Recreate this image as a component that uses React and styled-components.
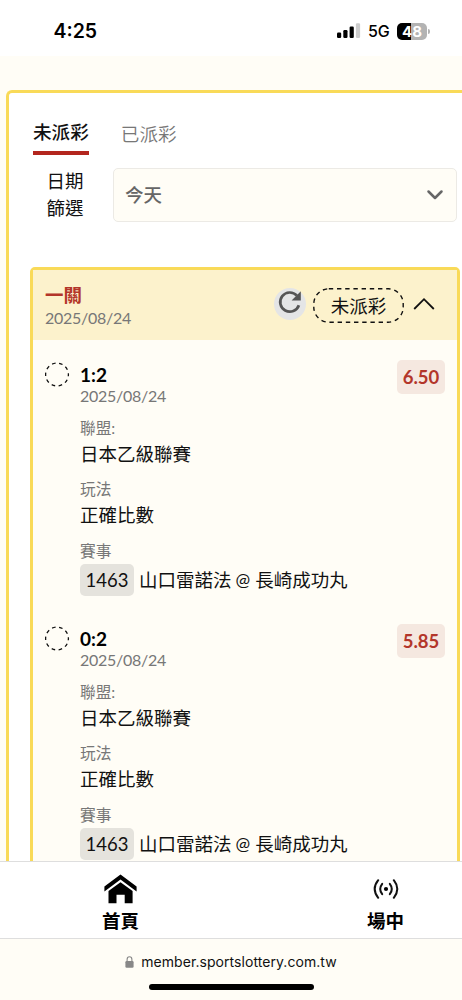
import styled, { createGlobalStyle } from "styled-components";

const bets = [
  {
    id: 1,
    pick: "1:2",
    date: "2025/08/24",
    league: "日本乙級聯賽",
    play: "正確比數",
    code: "1463",
    home: "山口雷諾法",
    away: "長崎成功丸",
    odds: "6.50",
  },
  {
    id: 2,
    pick: "0:2",
    date: "2025/08/24",
    league: "日本乙級聯賽",
    play: "正確比數",
    code: "1463",
    home: "山口雷諾法",
    away: "長崎成功丸",
    odds: "5.85",
  },
];

function StatusBar() {
  return (
    <StatusRow>
      <Clock>4:25</Clock>
      <StatusIcons>
        <svg width="24" height="16" viewBox="0 0 24 16">
          <rect x="0" y="9.5" width="4.2" height="5.5" rx="1.2" />
          <rect x="6.3" y="7" width="4.2" height="8" rx="1.2" />
          <rect x="12.6" y="3.6" width="4.2" height="11.4" rx="1.2" />
          <rect x="18.9" y="0.3" width="4.2" height="14.7" rx="1.2" fill="#ccc" />
        </svg>
        <Network>5G</Network>
        <Battery>48</Battery>
        <BatteryTip />
      </StatusIcons>
    </StatusRow>
  );
}

function Bet({ bet }) {
  return (
    <BetRow>
      <svg width="25" height="25" viewBox="0 0 25 25">
        <circle
          cx="12"
          cy="12.5"
          r="11.4"
          fill="none"
          stroke="#111"
          strokeWidth="1.3"
          strokeDasharray="3.6 3.563"
          strokeDashoffset="1.8"
        />
      </svg>
      <BetBody>
        <Pick>{bet.pick}</Pick>
        <DateText>{bet.date}</DateText>
        <Field>
          <Label>聯盟:</Label>
          <Value>{bet.league}</Value>
        </Field>
        <Field>
          <Label>玩法</Label>
          <Value>{bet.play}</Value>
        </Field>
        <Field>
          <Label>賽事</Label>
          <Match>
            <Code>{bet.code}</Code>
            <span>{bet.home}</span>
            <At>@</At>
            <span>{bet.away}</span>
          </Match>
        </Field>
      </BetBody>
      <Odds>{bet.odds}</Odds>
    </BetRow>
  );
}

function App() {
  return (
    <Phone>
      <GlobalStyle />
      <StatusBar />
      <Content>
        <Panel>
          <Tabs>
            <Tab $active>未派彩</Tab>
            <Tab>已派彩</Tab>
          </Tabs>
          <Filter>
            <FilterLabel>日期篩選</FilterLabel>
            <Select>
              今天
              <svg width="18" height="12" viewBox="0 0 18 12">
                <path
                  d="M2.5 3.5 L9 10 L15.5 3.5"
                  fill="none"
                  stroke="#666"
                  strokeWidth="2.5"
                  strokeLinecap="round"
                  strokeLinejoin="round"
                />
              </svg>
            </Select>
          </Filter>
          <Ticket>
            <TicketHeader>
              <TicketInfo>
                <TicketTitle>一關</TicketTitle>
                <DateText>2025/08/24</DateText>
              </TicketInfo>
              <Refresh>
                <svg width="32" height="32" viewBox="0 0 32 32">
                  <path
                    d="M24.9 17.2 A9.6 9.6 0 1 1 22.9 7.6"
                    fill="none"
                    stroke="#555"
                    strokeWidth="2.7"
                  />
                  <path d="M26.8 3.2 V12.4 H17.6 Z" fill="#555" />
                </svg>
              </Refresh>
              <Status>
                <svg width="91" height="35" viewBox="0 0 91 35">
                  <rect
                    x="0.8"
                    y="0.8"
                    width="89.4"
                    height="33.4"
                    rx="15"
                    fill="none"
                    stroke="#111"
                    strokeWidth="1.4"
                    strokeDasharray="4.4 3.8"
                  />
                </svg>
                <span>未派彩</span>
              </Status>
              <svg width="22" height="14" viewBox="0 0 22 14">
                <path
                  d="M1.2 12 L11 2.2 L20.8 12"
                  fill="none"
                  stroke="#111"
                  strokeWidth="1.8"
                />
              </svg>
            </TicketHeader>
            {bets.map((bet) => (
              <Bet key={bet.id} bet={bet} />
            ))}
          </Ticket>
        </Panel>
      </Content>
      <Nav>
        <NavItem>
          <NavIcon>
            <svg width="33" height="30" viewBox="0 0 33 30">
              <path d="M16.5 0.4 L32.6 12.6 V17.4 L16.5 5.6 L0.4 17.4 V12.6 Z" />
              <path d="M16.5 8.2 L28.6 17 V29.3 H20.7 V20.7 H12.5 V29.3 H4.5 V17 Z" />
            </svg>
          </NavIcon>
          首頁
        </NavItem>
        <NavItem>
          <NavIcon>
            <svg width="26" height="22" viewBox="0 0 26 22">
              <circle cx="13" cy="11" r="2.1" />
              <g fill="none" stroke="#111" strokeWidth="2" strokeLinecap="round">
                <path d="M9.2 5.8 Q5.2 11 9.2 16.2" />
                <path d="M16.8 5.8 Q20.8 11 16.8 16.2" />
                <path d="M5.2 2.2 Q-1.8 11 5.2 19.8" />
                <path d="M20.8 2.2 Q27.8 11 20.8 19.8" />
              </g>
            </svg>
          </NavIcon>
          場中
        </NavItem>
      </Nav>
      <BrowserBar>
        <Address>
          <svg width="9" height="12" viewBox="0 0 9 12">
            <rect x="0.4" y="5" width="8.2" height="6.8" rx="1.2" fill="#888" />
            <path
              d="M2.1 5.4 V3.4 A2.4 2.6 0 0 1 6.9 3.4 V5.4"
              fill="none"
              stroke="#888"
              strokeWidth="1.1"
            />
          </svg>
          member.sportslottery.com.tw
        </Address>
        <HomeIndicator />
      </BrowserBar>
    </Phone>
  );
}

/* ---------------- Styled Components ---------------- */

const GlobalStyle = createGlobalStyle`
  * {
    box-sizing: border-box;
  }

  body {
    margin: 0;
    background: #fffdf6;
  }

  svg {
    display: block;
    flex-shrink: 0;
  }
`;

const Phone = styled.div`
  width: 462px;
  height: 1000px;
  display: flex;
  flex-direction: column;
  overflow: hidden;
  background: #fffdf6;
  color: #111;
  font-family: Lato, "Noto Sans CJK TC", sans-serif;
  font-size: 18.5px;
`;

const StatusRow = styled.div`
  flex: 0 0 56px;
  display: flex;
  align-items: flex-start;
  justify-content: space-between;
  padding: 19px 32px 0 53.5px;
  background: #fff;
  color: #000;
  font-family: Inter, sans-serif;
`;

const Clock = styled.div`
  font-size: 19.5px;
  font-weight: 600;
  line-height: 24px;
`;

const StatusIcons = styled.div`
  display: flex;
  align-items: center;
  height: 24px;
`;

const Network = styled.span`
  margin-left: 7px;
  width: 22px;
  font-size: 16px;
  font-weight: 500;
  letter-spacing: -0.2px;
`;

const Battery = styled.div`
  width: 30px;
  height: 17px;
  margin-left: 7px;
  border-radius: 5px;
  background: linear-gradient(90deg, #000 48%, #b3b3b3 48%);
  color: #fff;
  font-size: 15px;
  font-weight: 700;
  line-height: 17px;
  text-align: center;
`;

const BatteryTip = styled.div`
  width: 2px;
  height: 5px;
  margin-left: 1px;
  border-radius: 0 2px 2px 0;
  background: #b3b3b3;
`;

const Content = styled.main`
  flex: 1 1 0;
  min-height: 0;
  overflow: hidden;
  padding: 33.5px 0 0 6px;
`;

const Panel = styled.section`
  height: 1000px;
  border: 3px solid #f9da58;
  border-right: none;
  border-top-left-radius: 6px;
  background: #fff;
  padding: 23.5px 2px 0 21px;
`;

const Tabs = styled.div`
  display: flex;
  gap: 32px;
  padding-left: 3px;
`;

const Tab = styled.button`
  height: 39px;
  padding: ${(p) => (p.$active ? "0 0 4px" : "1px 0 0")};
  border: none;
  border-bottom: 4px solid ${(p) => (p.$active ? "#b3261e" : "transparent")};
  background: none;
  color: ${(p) => (p.$active ? "#111" : "#777")};
  font-family: inherit;
  font-size: 18.6px;
  font-weight: ${(p) => (p.$active ? 500 : 350)};
  line-height: 28px;
`;

const Filter = styled.div`
  display: flex;
  align-items: center;
  margin-top: 12.5px;
  padding-left: 13px;
`;

const FilterLabel = styled.div`
  width: 44px;
  padding: 0 3px;
  margin-right: 26px;
  line-height: 27px;
  text-align: center;
`;

const Select = styled.div`
  flex: 1;
  height: 54px;
  display: flex;
  align-items: center;
  justify-content: space-between;
  padding: 0 12px 1px 11px;
  margin-right: 3px;
  border: 1.5px solid #eceae5;
  border-radius: 5px;
  background: #fffdf6;
  color: #666;
  font-weight: 500;
`;

const Ticket = styled.article`
  margin-top: 45px;
  border: 3px solid #f9da58;
  border-radius: 5px;
  background: #fffdf6;
`;

const TicketHeader = styled.header`
  height: 70px;
  display: flex;
  align-items: center;
  padding: 0 22px 2px 12px;
  background: #fcf2cc;
`;

const TicketInfo = styled.div`
  flex: 1;
  padding-top: 3px;
`;

const TicketTitle = styled.div`
  color: #b3362a;
  font-weight: 700;
  line-height: 25px;
`;

const DateText = styled.div`
  color: #777;
  font-size: 16px;
  letter-spacing: -0.27px;
  line-height: 20px;
`;

const Refresh = styled.div`
  width: 32px;
  height: 32px;
  border-radius: 50%;
  background: #e4e5e6;
`;

const Status = styled.div`
  display: grid;
  place-items: center;
  margin: 3px 9px 0 7px;

  > * {
    grid-area: 1 / 1;
  }
`;

const BetRow = styled.div`
  height: 264px;
  display: flex;
  align-items: flex-start;
  padding: 22px 12px 0 12px;
`;

const BetBody = styled.div`
  flex: 1;
  margin-left: 10px;
`;

const Pick = styled.div`
  height: 24px;
  color: #000;
  font-size: 19px;
  font-weight: 700;
  line-height: 26px;
`;

const Field = styled.div`
  height: 49px;
  margin-top: 12.4px;
`;

const Label = styled.div`
  color: #777;
  font-size: 15.7px;
  line-height: 20px;
`;

const Value = styled.div`
  line-height: 32px;
`;

const Match = styled.div`
  display: flex;
  align-items: center;
  margin-top: 3px;
  line-height: 30px;
  white-space: nowrap;
`;

const Code = styled.span`
  width: 54px;
  height: 32px;
  margin-right: 5px;
  border-radius: 5px;
  background: #e5e3dd;
  line-height: 32px;
  text-align: center;
`;

const At = styled.span`
  margin: 0 5px 0 4px;
  font-size: 17.5px;
`;

const Odds = styled.div`
  width: 48px;
  height: 34px;
  margin-top: -2px;
  border-radius: 5px;
  background: #f5e8e0;
  color: #b3362a;
  font-size: 18.5px;
  font-weight: 700;
  line-height: 35px;
  text-align: center;
`;

const Nav = styled.nav`
  flex: 0 0 78px;
  display: flex;
  justify-content: space-between;
  padding: 0 37px 0 81px;
  border-top: 1px solid #dedede;
  border-bottom: 1px solid #dedede;
  background: #fff;
`;

const NavItem = styled.div`
  width: 79px;
  display: flex;
  flex-direction: column;
  align-items: center;
  padding-top: 9px;
  color: #000;
  font-weight: 700;
  line-height: 30px;
`;

const NavIcon = styled.div`
  height: 35px;
  display: grid;
  place-items: center;
`;

const BrowserBar = styled.footer`
  flex: 0 0 61px;
  display: flex;
  flex-direction: column;
  align-items: center;
  padding-top: 12px;
`;

const Address = styled.div`
  display: flex;
  align-items: center;
  gap: 7px;
  color: #111;
  font-family: Inter, sans-serif;
  font-size: 14px;
  letter-spacing: 0.06px;
  line-height: 22px;
`;

const HomeIndicator = styled.div`
  width: 165px;
  height: 6px;
  margin-top: 11px;
  border-radius: 3px;
  background: #000;
`;

export default App;
